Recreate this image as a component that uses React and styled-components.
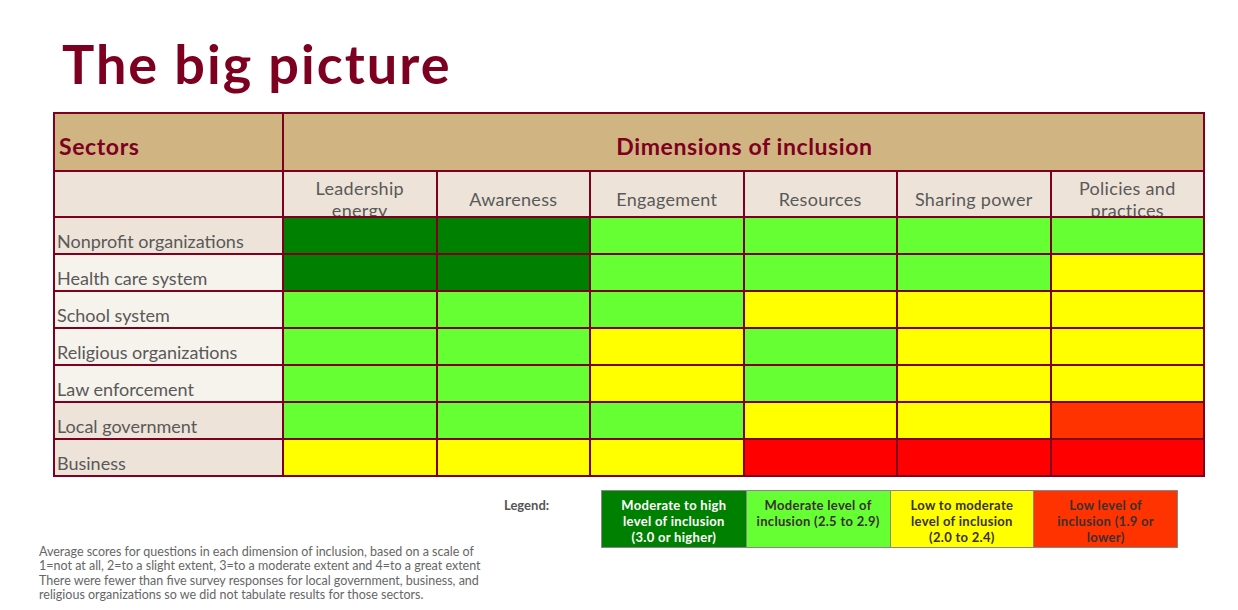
import React from 'react';
import styled, { createGlobalStyle } from 'styled-components';

const GlobalStyle = createGlobalStyle`
  html, body {
    margin: 0;
    padding: 0;
    background: #fff;
  }
  body {
    font-family: 'Lato', 'Liberation Sans', sans-serif;
  }
`;

const MAROON = '#7d0021';

const COLORS = {
  DG: '#008000',
  LG: '#66ff33',
  Y: '#ffff00',
  O: '#ff3300',
  R: '#ff0000',
};

const Page = styled.div`
  width: 1238px;
  height: 610px;
  overflow: hidden;
  display: flex;
  flex-direction: column;
`;

const Title = styled.h1`
  margin: 37px 0 0 62px;
  font-size: 54px;
  line-height: 54px;
  font-weight: 700;
  color: ${MAROON};
  letter-spacing: 2px;
`;

const Table = styled.table`
  margin: 21px 0 0 53px;
  width: 1152px;
  table-layout: fixed;
  border-collapse: collapse;
  border: 2px solid ${MAROON};
`;

const HeadCell = styled.th`
  height: 48px;
  padding: 8px 2px 0 4px;
  background: #d0b582;
  border: 2px solid ${MAROON};
  color: ${MAROON};
  font-size: 23px;
  letter-spacing: 0.6px;
  font-weight: 700;
  text-align: ${p => (p.center ? 'center' : 'left')};
  vertical-align: middle;
`;

const SubCell = styled.td`
  height: 44px;
  padding: 0;
  background: #ede3d8;
  border: 2px solid ${MAROON};
`;

const SubLabel = styled.div`
  height: 44px;
  box-sizing: border-box;
  padding-top: 10px;
  overflow: hidden;
  display: flex;
  align-items: center;
  justify-content: center;
  text-align: center;
  white-space: pre-line;
  font-size: 18px;
  letter-spacing: 0.3px;
  line-height: 22px;
  font-weight: 400;
  color: #595959;
`;

const SectorCell = styled.td`
  height: 34px;
  padding: 0 2px 1px;
  background: ${p => (p.dark ? '#ede3d8' : '#f6f2ec')};
  border: 2px solid ${MAROON};
  font-size: 18px;
  line-height: 22px;
  color: #595959;
  vertical-align: bottom;
  white-space: nowrap;
`;

const ScoreCell = styled.td`
  height: 35px;
  padding: 0;
  background: ${p => COLORS[p.level]};
  border: 2px solid ${MAROON};
`;

const Bottom = styled.div`
  margin-top: 13px;
  display: flex;
  align-items: flex-start;
`;

const Footnote = styled.p`
  margin: 55px 0 0 39px;
  width: 465px;
  font-size: 12.5px;
  line-height: 14.4px;
  color: #666;
  white-space: nowrap;
`;

const Legend = styled.div`
  display: flex;
  align-items: flex-start;
`;

const LegendLabel = styled.div`
  width: 97px;
  padding-top: 7px;
  font-size: 13px;
  font-weight: 700;
  color: #555;
`;

const LegendRow = styled.div`
  display: flex;
  border: 1.5px solid #888;
`;

const LegendBox = styled.div`
  width: 143.75px;
  height: 56px;
  box-sizing: border-box;
  padding-top: 6px;
  background: ${p => COLORS[p.level]};
  border-left: ${p => (p.first ? 'none' : '1.5px solid #888')};
  color: ${p => (p.light ? '#fff' : '#3a3030')};
  font-size: 13px;
  letter-spacing: 0.3px;
  line-height: 16px;
  font-weight: 700;
  text-align: center;
  white-space: pre-line;
`;

const dimensions = [
  'Leadership\nenergy',
  'Awareness',
  'Engagement',
  'Resources',
  'Sharing power',
  'Policies and\npractices',
];

const sectors = [
  { name: 'Nonprofit organizations', dark: true, scores: ['DG', 'DG', 'LG', 'LG', 'LG', 'LG'] },
  { name: 'Health care system', scores: ['DG', 'DG', 'LG', 'LG', 'LG', 'Y'] },
  { name: 'School system', scores: ['LG', 'LG', 'LG', 'Y', 'Y', 'Y'] },
  { name: 'Religious organizations', scores: ['LG', 'LG', 'Y', 'LG', 'Y', 'Y'] },
  { name: 'Law enforcement', scores: ['LG', 'LG', 'Y', 'LG', 'Y', 'Y'] },
  { name: 'Local government', dark: true, scores: ['LG', 'LG', 'LG', 'Y', 'Y', 'O'] },
  { name: 'Business', dark: true, scores: ['Y', 'Y', 'Y', 'R', 'R', 'R'] },
];

const legend = [
  { level: 'DG', light: true, text: 'Moderate to high\nlevel of inclusion\n(3.0 or higher)' },
  { level: 'LG', text: 'Moderate level of\ninclusion (2.5 to 2.9)' },
  { level: 'Y', text: 'Low to moderate\nlevel of inclusion\n(2.0 to 2.4)' },
  { level: 'O', text: 'Low level of\ninclusion (1.9 or\nlower)' },
];

export default function App() {
  return (
    <Page>
      <GlobalStyle />
      <Title>The big picture</Title>

      <Table>
        <colgroup>
          <col style={{ width: 229 }} />
          {dimensions.map(d => (
            <col key={d} />
          ))}
        </colgroup>
        <thead>
          <tr>
            <HeadCell>Sectors</HeadCell>
            <HeadCell center colSpan={6}>Dimensions of inclusion</HeadCell>
          </tr>
          <tr>
            <SubCell />
            {dimensions.map(d => (
              <SubCell key={d}>
                <SubLabel>{d}</SubLabel>
              </SubCell>
            ))}
          </tr>
        </thead>
        <tbody>
          {sectors.map(s => (
            <tr key={s.name}>
              <SectorCell dark={s.dark}>{s.name}</SectorCell>
              {s.scores.map((lv, i) => (
                <ScoreCell key={i} level={lv} />
              ))}
            </tr>
          ))}
        </tbody>
      </Table>

      <Bottom>
        <Footnote>
          Average scores for questions in each dimension of inclusion, based on a scale of
          <br />
          1=not at all, 2=to a slight extent, 3=to a moderate extent and 4=to a great extent
          <br />
          There were fewer than five survey responses for local government, business, and
          <br />
          religious organizations so we did not tabulate results for those sectors.
        </Footnote>
        <Legend>
          <LegendLabel>Legend:</LegendLabel>
          <LegendRow>
            {legend.map((l, i) => (
              <LegendBox key={l.level} level={l.level} light={l.light} first={i === 0}>
                {l.text}
              </LegendBox>
            ))}
          </LegendRow>
        </Legend>
      </Bottom>
    </Page>
  );
}
